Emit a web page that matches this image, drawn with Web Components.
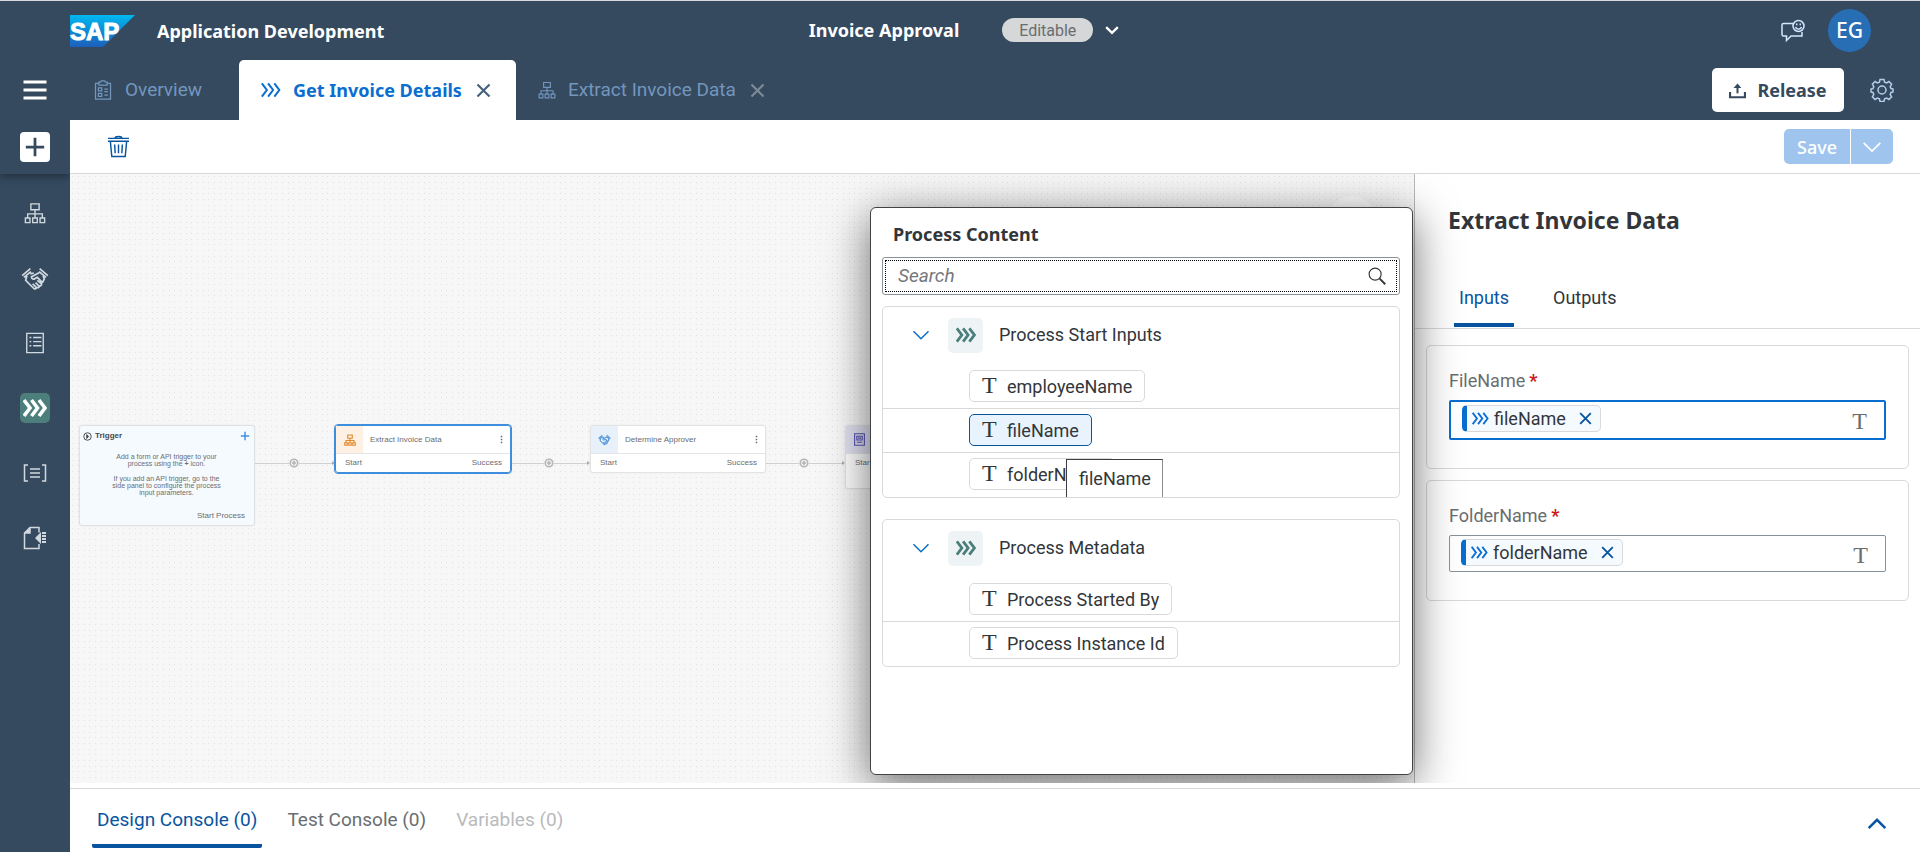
<!DOCTYPE html>
<html lang="en">
<head>
<meta charset="utf-8">
<title>Application Development</title>
<style>
html, body { margin: 0; }
body { font: 18px/24px Roboto, "Noto Sans", sans-serif; color: #32363a; background: #fff; }
</style>
</head>
<body>
<dev-app></dev-app>
<script>
const define = (name, html) => {
  const template = document.createElement('template');
  template.innerHTML = '<style>*{box-sizing:border-box}button{font:inherit;color:inherit;background:none;border:0;padding:0;margin:0;cursor:pointer}</style>' + html;
  customElements.define(name, class extends HTMLElement {
    constructor() {
      super();
      this.attachShadow({ mode: 'open' }).append(template.content.cloneNode(true));
    }
  });
};

const ICONS = {
  menu: '<path d="M.5 4h23M.5 12h23M.5 20h23" stroke-width="3.2"/>',
  plus: '<path d="M12 2v20M2 12h20"/>',
  clipboard: '<path d="M7 4H3v19h18V4h-4M7 2.500l2 0 1-1.500h4l1 1.500h2V6H7zM6.500 9.500h4v3.500h-4zM6.500 16h4v3.500h-4zM13.500 11H18M13.500 14H18M13.500 18H18"/>',
  chevrons: '<path d="M1 4l6 8-6 8M8.500 4l6 8-6 8M16 4l6 8-6 8"/>',
  close: '<path d="M3.500 3.500l17 17M20.500 3.500l-17 17"/>',
  tree: '<path d="M7.500 2h9v6.500h-9zM12 8.500V17M4 17v-4h16v4M1.500 17.500h5v5h-5zM9.500 17.500h5v5h-5zM17.500 17.500h5v5h-5z"/>',
  hands: '<path d="M1 10L8 4M2.500 11.500l6-5M23 10l-7-6M21.500 11.500l-6-5M5 10l-1 4 7 7c1 1 2.500 0 2-1l-3-3M13.500 20c1.200.800 2.500 0 2-1l-3-3M15.500 18.500c1.200.800 2.500-.300 2-1.500L14 14M17.500 16.500l2-2M19 14.500l1-1.500-1-3M8 8.500l3-.800M15.500 7.500L9 11c0 2 2 2.500 3 1.500l2-1 4 4"/>',
  list: '<path d="M3 1.500h18v21H3zM6 6h2M10 6h9M6 10.500h2M10 10.500h9M6 15h2M10 15h9"/>',
  brackets: '<path d="M5 4H1.500v16H5M19 4h3.500v16H19M7 8h10M7 12h10M7 16h10"/>',
  exportdoc: '<path d="M16 6.500V1.500H7L1.500 7v15.500H16V18M7 1.500V7H1.500"/><path d="M1.500 7L7 1.500V7zM12 12l6-6v12z" fill="currentColor" stroke="none"/><path d="M19 7h4M19 10h4M19 13h4M19 16h4" stroke-width="2.200"/>',
  trash: '<path d="M1 3.500h22M1 6.500h22M8.500 3c0-2 7-2 7 0M3.500 6.500L5 22.500h14L20.500 6.500M8 10l.500 9M12 10v9M16 10l-.500 9"/>',
  down: '<path d="M2 7l10 10L22 7"/>',
  up: '<path d="M2 17L12 7l10 10"/>',
  share: '<path d="M1.500 14v7.500h21V14" stroke-width="3"/><path d="M12 16V5" stroke-width="2.800"/><path d="M6.500 8.500L12 2l5.500 6.500z" fill="currentColor" stroke="none"/>',
  gear: '<path d="M10 1.500h4l.600 2.600 2 .800 2.300-1.400 2.700 2.700-1.400 2.300.800 2 2 .500v3l-2 .500-.800 2 1.400 2.300-2.700 2.700-2.300-1.400-2 .800-.600 2.600h-4l-.600-2.600-2-.800-2.300 1.400-2.700-2.700 1.400-2.300-.800-2-2-.500v-3l2-.500.800-2-1.400-2.300 2.700-2.700 2.300 1.400 2-.800z"/><circle cx="12" cy="12" r="4"/>',
  feedback: '<path d="M12 4.500H2.500c-1 0-1.500.500-1.500 1.500v9.500c0 1 .500 1.500 1.500 1.500h3v4.500L10 17h11V13"/><circle cx="17.500" cy="7" r="5.500"/><path d="M14.500 8c1 3 5 3 6 0M15.700 4.500v1.800M19.300 4.500v1.800"/>',
  search: '<circle cx="9.500" cy="9.500" r="8"/><path d="M15.500 15.500L23 23" stroke-width="2.600"/>',
  trigger: '<circle cx="12" cy="12" r="10"/><path d="M10 7l5 5-5 5z" fill="currentColor"/>',
  connect: '<circle cx="12" cy="12" r="9"/><path d="M12 7v10M7 12h10"/>',
  dots: '<path d="M12 2v4M12 10v4M12 18v4" stroke-width="4"/>',
  form: '<path d="M3 1.500h18v21H3zM7 6h10v7H7zM9 9.500h6M7 17h10"/>'
};

customElements.define('dev-icon', class extends HTMLElement {
  connectedCallback() {
    if (this.shadowRoot) return;
    const size = this.getAttribute('size') || 20;
    this.attachShadow({ mode: 'open' }).innerHTML =
      `<style>:host{display:inline-flex;flex:none}svg{display:block}</style>
      <svg width="${size}" height="${size}" viewBox="0 0 24 24" fill="none" stroke="currentColor"
        stroke-width="${this.getAttribute('weight') || 1.5}" aria-hidden="true">${ICONS[this.getAttribute('name')]}</svg>`;
  }
});

define('dev-topbar', `
<style>
:host { display: flex; align-items: center; height: 60px; background: #354a5f; border-top: 1px solid #d5dadd; color: #fff; padding: 0 49px 0 70px; position: relative; font: 700 18px/24px "Noto Sans", sans-serif; }
.logo { margin-right: 22px; display: block; }
.mid { position: absolute; left: 0; right: 0; top: 17px; display: flex; justify-content: center; align-items: center; padding-left: 8px; }
.pill { margin: 0 12px 0 43px; background: #d5d7d8; color: #6a6d70; border-radius: 12px; height: 24px; width: 91px; text-align: center; font: 400 16px/26px Roboto, sans-serif; }
.mid button { display: flex; }
.right { margin-left: auto; display: flex; align-items: center; gap: 23px; }
.right button { display: flex; color: #d1e8ff; }
.avatar { width: 43px; height: 43px; border-radius: 50%; background: #286eb4; color: #fff; font: 500 21px/43px "Noto Sans", sans-serif; text-align: center; }
</style>
<svg class="logo" width="65" height="32" viewBox="0 0 65 32" role="img" aria-label="SAP">
  <defs><linearGradient id="g" x2="0" y2="1"><stop offset="0" stop-color="#00b8f1"/><stop offset="1" stop-color="#1d5fbb"/></linearGradient></defs>
  <path d="M0 0h65L33 32H0z" fill="url(#g)"/>
  <text x="0" y="25" fill="#fff" stroke="#fff" font-family="Liberation Sans, sans-serif" font-weight="700" font-size="24">SAP</text>
</svg>
<span>Application Development</span>
<div class="mid"><span>Invoice Approval</span><span class="pill">Editable</span><button aria-label="Versions"><dev-icon name="down" size="14" weight="4"></dev-icon></button></div>
<div class="right"><button aria-label="Feedback"><dev-icon name="feedback" size="24"></dev-icon></button><span class="avatar">EG</span></div>
`);

define('dev-sidebar', `
<style>
:host { display: flex; flex-direction: column; flex: none; width: 70px; background: #354a5f; color: #d1d9e0; }
.head { height: 114px; box-shadow: 0 3px 8px rgba(0,0,0,.35); display: flex; flex-direction: column; align-items: center; padding-top: 18px; gap: 30px; color: #fff; }
button { display: flex; align-items: center; justify-content: center; }
.add { width: 30px; height: 30px; background: #fff; color: #354a5f; border-radius: 4px; }
nav { display: flex; flex-direction: column; align-items: center; gap: 35px; padding-top: 24px; }
nav button { width: 30px; height: 30px; border-radius: 5px; }
nav .on { background: #4c7f7c; color: #fff; }
</style>
<div class="head">
  <button aria-label="Menu"><dev-icon name="menu" size="24"></dev-icon></button>
  <button class="add" aria-label="Add"><dev-icon name="plus" size="22" weight="3"></dev-icon></button>
</div>
<nav>
  <button aria-label="Processes"><dev-icon name="tree" size="22"></dev-icon></button>
  <button aria-label="Decisions"><dev-icon name="hands" size="28"></dev-icon></button>
  <button aria-label="Forms"><dev-icon name="list" size="22"></dev-icon></button>
  <button class="on" aria-label="Automations"><dev-icon name="chevrons" size="24" weight="3.6"></dev-icon></button>
  <button aria-label="Data types"><dev-icon name="brackets" size="24"></dev-icon></button>
  <button aria-label="Files"><dev-icon name="exportdoc" size="24"></dev-icon></button>
</nav>
`);

define('dev-tab', `
<style>
:host { display: flex; align-items: center; height: 60px; color: #7396bd; font: 400 19px/24px Roboto, sans-serif; }
:host([active]) { background: #fff; color: #0a6ed1; font: 700 18px/24px "Noto Sans", sans-serif; border-radius: 5px 5px 0 0; }
.open { display: flex; align-items: center; gap: 12px; }
.close { display: flex; color: #7d8b99; margin-left: 13px; }
:host([active]) .close { color: #46617c; }
:host(:not([closable])) .close { display: none; }
</style>
<button class="open"><slot name="icon"></slot><slot></slot></button>
<button class="close" aria-label="Close tab"><dev-icon name="close" size="17" weight="3"></dev-icon></button>
`);

define('dev-tabstrip', `
<style>
:host { display: flex; height: 60px; background: #354a5f; padding-right: 26px; }
dev-tab:nth-of-type(1) { padding: 0 37px 0 23px; }
dev-tab:nth-of-type(2) { padding: 0 24px 0 22px; }
dev-tab:nth-of-type(3) { padding: 0 22px; }
.actions { margin-left: auto; display: flex; align-items: center; gap: 26px; color: #b3cdea; }
button { display: flex; align-items: center; }
.release { background: #fff; color: #354a5f; font: 700 18px/24px "Noto Sans", sans-serif; width: 132px; height: 44px; border-radius: 5px; justify-content: center; gap: 11px; }
</style>
<dev-tab><dev-icon slot="icon" name="clipboard" size="20"></dev-icon>Overview</dev-tab>
<dev-tab active closable><dev-icon slot="icon" name="chevrons" size="20" weight="2.4"></dev-icon>Get Invoice Details</dev-tab>
<dev-tab closable><dev-icon slot="icon" name="tree" size="18"></dev-icon>Extract Invoice Data</dev-tab>
<div class="actions">
  <button class="release"><dev-icon name="share" size="17"></dev-icon>Release</button>
  <button aria-label="Settings"><dev-icon name="gear" size="24"></dev-icon></button>
</div>
`);

define('dev-toolbar', `
<style>
:host { display: flex; align-items: center; justify-content: space-between; height: 54px; padding: 0 27px 0 37px; border-bottom: 1px solid #d9d9d9; background: #fff; }
button { display: flex; align-items: center; justify-content: center; color: #0854a0; }
.split { display: flex; gap: 1px; }
.split button { background: #9fc5ee; color: #fff; height: 35px; font: 500 18px/24px "Noto Sans", sans-serif; }
.split .save { width: 66px; border-radius: 5px 0 0 5px; }
.split .more { width: 42px; border-radius: 0 5px 5px 0; }
</style>
<button aria-label="Delete"><dev-icon name="trash" size="23"></dev-icon></button>
<div class="split"><button class="save">Save</button><button class="more" aria-label="Save options"><dev-icon name="down" size="20" weight="2"></dev-icon></button></div>
`);

define('dev-node', `
<style>
:host { position: absolute; width: 176px; background: #fff; border: 1px solid #e2e3e4; border-radius: 3px; font: 8px/10px "Liberation Sans", Arial, sans-serif; color: #6a6d70; box-shadow: 0 0 2px rgba(0,0,0,.08); }
:host([selected]) { outline: 1px solid #3f8ede; border-color: #3f8ede; }
.top { display: flex; align-items: center; height: 28px; border-bottom: 1px solid #e4e5e6; padding-right: 4px; }
.cell { width: 27px; align-self: stretch; display: flex; align-items: center; justify-content: center; margin-right: 7px; background: var(--tint); color: var(--ink); }
.top dev-icon:last-child { margin-left: auto; }
.ports { display: flex; justify-content: space-between; padding: 4px 8px 4px 9px; }
</style>
<div class="top"><span class="cell"><slot name="icon"></slot></span><slot></slot><dev-icon name="dots" size="9"></dev-icon></div>
<div class="ports"><span>Start</span><slot name="out"></slot></div>
`);

define('dev-link', `
<style>
:host { position: absolute; display: flex; align-items: center; height: 10px; width: 80px; color: #b4b6b8; }
i { flex: 1; height: 1px; background: #cfd0d1; }
b { border-left: 3px solid #a9abad; border-top: 2px solid transparent; border-bottom: 2px solid transparent; }
</style><i></i><dev-icon name="connect" size="10" weight="4"></dev-icon><i></i><b></b>
`);

define('dev-canvas', `
<style>
:host { display: block; position: relative; flex: 1; min-width: 0; z-index: 1; }
.dots { position: absolute; inset: 0; width: 100%; height: 100%; background: #f7f7f7; }
.trigger { position: absolute; left: 9px; top: 251px; width: 176px; height: 101px; background: #f5faff; border: 1px solid #dfe2e5; border-radius: 3px; box-shadow: 0 0 2px rgba(0,0,0,.08); padding: 5px 4px 3px 3px; display: flex; flex-direction: column; font: 7px/7px "Liberation Sans", Arial, sans-serif; color: #6a6d70; text-align: center; }
.trigger header { display: flex; align-items: center; gap: 3px; font-size: 8px; line-height: 10px; font-weight: 700; color: #44484c; }
.trigger header button { margin-left: auto; color: #3f8ede; display: flex; }
.trigger p { margin: 0 0 8px; }
.trigger p:first-of-type { margin-top: 12px; }
.trigger footer { margin-top: auto; padding-right: 5px; text-align: right; font-size: 8px; line-height: 12px; }
.n1 { left: 265px; top: 251px; --tint: #fef0e3; --ink: #e0892b; }
.n2 { left: 520px; top: 251px; --tint: #e8f1fa; --ink: #5b9bdb; }
.n3 { left: 775px; top: 251px; height: 64px; --tint: #e2e2f3; --ink: #5552b5; }
.l1 { left: 185px; top: 284px; } .l2 { left: 440px; top: 284px; } .l3 { left: 695px; top: 284px; }
.round { position: absolute; right: 38px; top: 22px; width: 48px; height: 48px; border-radius: 50%; background: #fff; opacity: .8; }
dev-picker { position: absolute; right: 1px; top: 33px; bottom: 8px; }
</style>
<svg class="dots" aria-hidden="true"><defs><pattern id="p" width="17" height="17" patternUnits="userSpaceOnUse">
<path d="M2 2h1v1h-1zM8 2h1v1h-1zM14 2h1v1h-1zM2 8h1v1h-1zM8 8h1v1h-1zM14 8h1v1h-1zM2 14h1v1h-1zM8 14h1v1h-1zM14 14h1v1h-1z" fill="#e2e2e2"/></pattern></defs><rect width="100%" height="100%" fill="url(#p)"/></svg>
<section class="trigger">
  <header><dev-icon name="trigger" size="9" weight="2.6"></dev-icon>Trigger<button aria-label="Add trigger"><dev-icon name="plus" size="10" weight="3.4"></dev-icon></button></header>
  <p>Add a form or API trigger to your<br>process using the <b>+</b> icon.</p>
  <p>If you add an API trigger, go to the<br>side panel to configure the process<br>input parameters.</p>
  <footer>Start Process</footer>
</section>
<dev-link class="l1"></dev-link><dev-link class="l2"></dev-link><dev-link class="l3"></dev-link>
<dev-node class="n1" selected><dev-icon slot="icon" name="tree" size="12" weight="2.2"></dev-icon>Extract Invoice Data<span slot="out">Success</span></dev-node>
<dev-node class="n2"><dev-icon slot="icon" name="hands" size="13" weight="2"></dev-icon>Determine Approver<span slot="out">Success</span></dev-node>
<dev-node class="n3"><dev-icon slot="icon" name="form" size="13" weight="2"></dev-icon></dev-node>
<span class="round"></span>
<dev-picker></dev-picker>
`);

define('dev-chip', `
<style>
:host { display: flex; height: 44px; padding: 5px 0 6px 86px; border-top: 1px solid #d9d9d9; }
:host(:first-of-type) { border-top-color: transparent; }
button { display: flex; align-items: center; height: 32px; border: 1px solid #d9d9d9; border-radius: 5px; padding: 2px 12px 0 12px; background: #fff; }
:host([selected]) button { border-color: #0854a0; background: #e8f3fd; }
i { font: 400 24px/24px "Liberation Serif", serif; width: 25px; height: 28px; text-align: left; }
</style>
<button><i aria-hidden="true">T</i><slot></slot></button>
`);

define('dev-group', `
<style>
:host { display: block; border: 1px solid #d9d9d9; border-radius: 5px; margin: 0 12px 21px 11px; padding-bottom: 1px; overflow: hidden; position: relative; }
.head { display: flex; align-items: center; height: 57px; padding: 0 0 1px 29px; }
.head button { display: flex; color: #0a6ed1; margin-right: 18px; }
.tile { width: 35px; height: 35px; border-radius: 5px; background: #eef3f6; color: #4c7f7c; display: flex; align-items: center; justify-content: center; margin-right: 16px; }
</style>
<div class="head"><button aria-label="Collapse"><dev-icon name="down" size="18" weight="2"></dev-icon></button><span class="tile"><dev-icon name="chevrons" size="20" weight="3.4"></dev-icon></span><slot name="title"></slot></div>
<slot></slot>
`);

define('dev-picker', `
<style>
:host { display: block; width: 543px; background: #fff; border: 1px solid #404346; border-radius: 6px; box-shadow: 0 10px 45px rgba(0,0,0,.58); }
h2 { font: 700 18px/24px "Noto Sans", sans-serif; margin: 14px 22px 11px; }
.search { display: flex; align-items: center; margin: 0 12px 11px 11px; height: 38px; border: 1px solid #89919a; border-radius: 3px; padding: 2px; }
.inner { display: flex; align-items: center; flex: 1; height: 32px; border: 1px dotted #000; padding: 0 10px 0 12px; }
input { font: italic 19px/24px Roboto, sans-serif; flex: 1; min-width: 0; border: 0; outline: 0; padding: 0; background: none; color: #32363a; }
input::placeholder { color: #74777a; opacity: 1; }
button { display: flex; }
.tip { position: absolute; left: 183px; top: 152px; width: 97px; height: 44px; background: #fff; border: 1px solid #3c3f42; border-right-color: #8a8d90; font: 18px/24px Roboto, sans-serif; padding: 7px 0 0 12px; }
</style>
<h2>Process Content</h2>
<div class="search"><div class="inner"><input type="text" placeholder="Search" aria-label="Search"><button aria-label="Search"><dev-icon name="search" size="18"></dev-icon></button></div></div>
<dev-group><span slot="title">Process Start Inputs</span>
  <dev-chip>employeeName</dev-chip><dev-chip selected>fileName</dev-chip><dev-chip>folderName</dev-chip>
  <span class="tip" role="tooltip">fileName</span></dev-group>
<dev-group><span slot="title">Process Metadata</span>
  <dev-chip>Process Started By</dev-chip><dev-chip>Process Instance Id</dev-chip></dev-group>
`);

define('dev-field', `
<style>
:host { display: block; border: 1px solid #d9d9d9; border-radius: 5px; margin: 0 11px 11px; padding: 23px 22px 28px; }
label { display: block; color: #6a6d70; margin-bottom: 7px; }
label b { color: #cc1919; margin-left: 4px; }
.box { display: flex; height: 37px; border: 1px solid #89919a; border-radius: 2px; padding: 3px 17px 3px 11px; }
:host([focused]) .box { height: 40px; border: 2px solid #0a6ed1; }
.token { display: flex; align-items: center; height: 27px; border: 1px solid #d9d9d9; border-left: 5px solid #0a6ed1; border-radius: 5px; background: #f5faff; padding: 0 7px 0 5px; }
.token dev-icon { color: #0a6ed1; margin-right: 5px; }
.token button { display: flex; margin-left: 12px; }
.token button dev-icon { color: #0854a0; margin: 0; }
input { flex: 1; min-width: 0; border: 0; outline: 0; background: none; font: inherit; }
i { font: 400 24px/24px "Liberation Serif", serif; color: #6a6d70; margin-top: 4px; }
</style>
<label for="f"><slot name="label"></slot><b>*</b></label>
<div class="box"><span class="token"><dev-icon name="chevrons" size="17" weight="2.6"></dev-icon><slot></slot><button aria-label="Remove"><dev-icon name="close" size="15" weight="3"></dev-icon></button></span><input id="f" type="text"><i aria-hidden="true">T</i></div>
`);

define('dev-panel', `
<style>
:host { display: block; flex: none; width: 506px; border-left: 1px solid #b5b7b9; background: #fff; }
h1 { font: 700 23px/32px "Noto Sans", sans-serif; margin: 30px 33px 50px; }
.tabs { display: flex; gap: 34px; border-bottom: 1px solid #d9d9d9; padding: 0 39px; margin-bottom: 16px; }
.tabs button { padding: 0 5px 14px; border-bottom: 4px solid transparent; height: 41px; margin-bottom: 1px; }
.tabs .on { color: #0854a0; border-color: #0854a0; border-radius: 2px 2px 0 0; }
</style>
<h1>Extract Invoice Data</h1>
<div class="tabs" role="tablist"><button class="on" role="tab">Inputs</button><button role="tab">Outputs</button></div>
<dev-field focused><span slot="label">FileName</span>fileName</dev-field>
<dev-field><span slot="label">FolderName</span>folderName</dev-field>
`);

define('dev-console', `
<style>
:host { display: flex; align-items: stretch; height: 64px; margin-top: 5px; border-top: 1px solid #d9d9d9; padding: 0 33px 0 22px; background: #fff; font-size: 19px; }
button { padding: 18px 5px 11px; border-bottom: 4px solid transparent; margin: 0 20px 4px 0; height: 59px; color: #6a6d70; }
.on { color: #0854a0; border-color: #0854a0; border-radius: 2px; }
[disabled] { color: #b9babc; }
.up { margin: 0 0 0 auto; color: #0854a0; display: flex; padding: 25px 0 0; border: 0; }
</style>
<button class="on">Design Console (0)</button><button>Test Console (0)</button><button disabled>Variables (0)</button>
<button class="up" aria-label="Expand console"><dev-icon name="up" size="20" weight="3"></dev-icon></button>
`);

define('dev-app', `
<style>
:host { display: flex; flex-direction: column; min-height: 100vh; }
.row { display: flex; flex: 1; }
main { display: flex; flex-direction: column; flex: 1; min-width: 0; }
.work { display: flex; flex: 1; overflow: hidden; min-height: 560px; }
</style>
<dev-topbar></dev-topbar>
<div class="row"><dev-sidebar></dev-sidebar>
<main><dev-tabstrip></dev-tabstrip><dev-toolbar></dev-toolbar>
<div class="work"><dev-canvas></dev-canvas><dev-panel></dev-panel></div>
<dev-console></dev-console></main></div>
`);
</script>
</body>
</html>
